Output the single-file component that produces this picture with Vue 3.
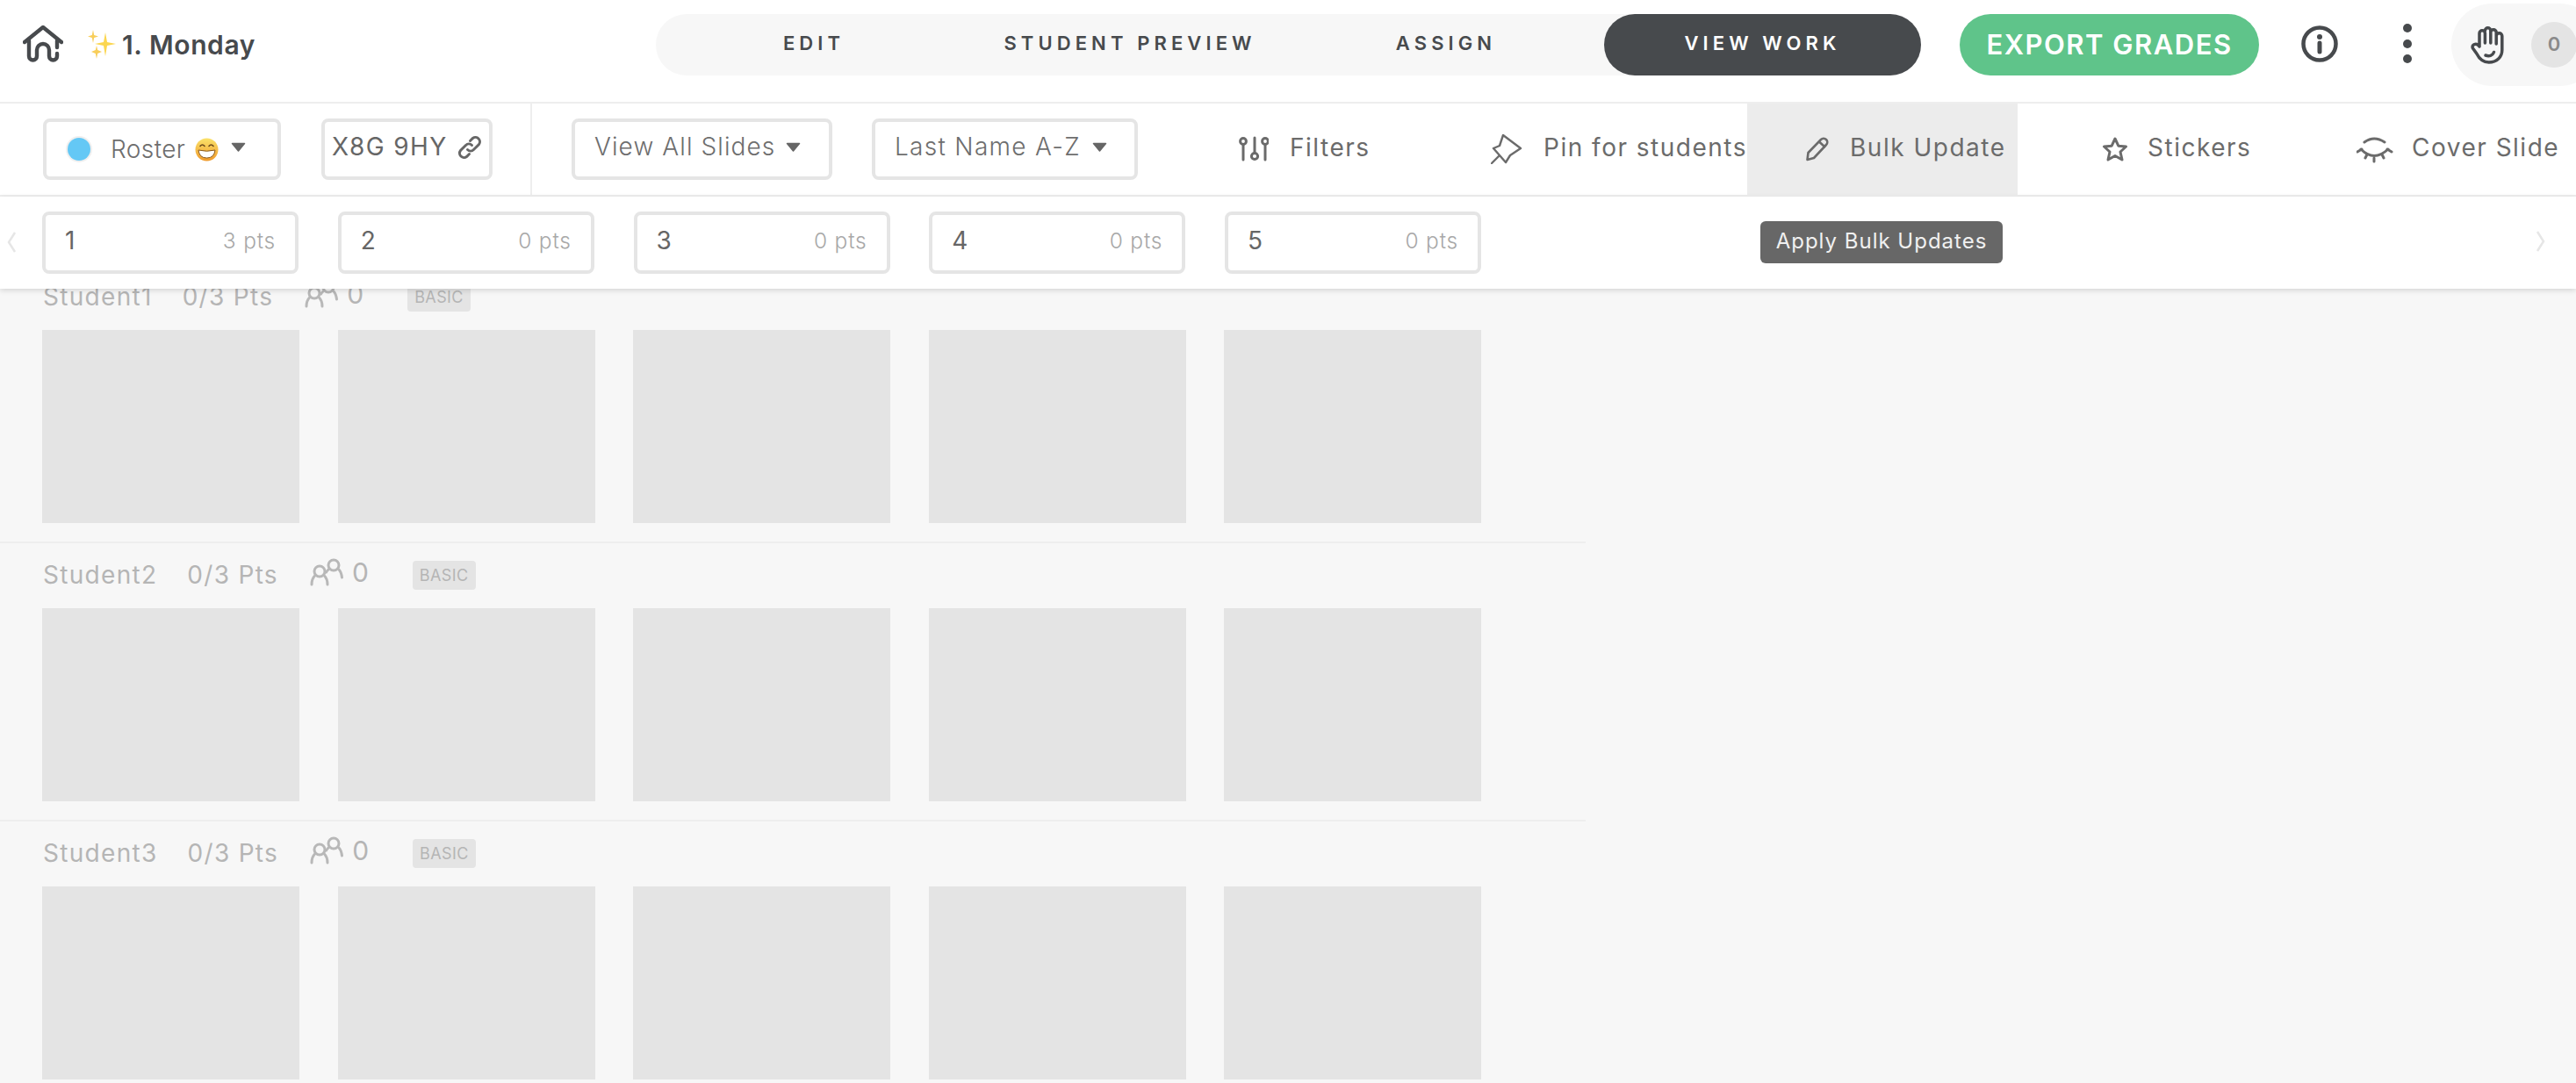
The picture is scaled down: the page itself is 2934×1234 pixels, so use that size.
<script setup>
const tabs = [
  { label: 'EDIT' },
  { label: 'STUDENT PREVIEW' },
  { label: 'ASSIGN' },
  { label: 'VIEW WORK', active: true },
]
const slides = [
  { n: 1, pts: 3 },
  { n: 2, pts: 0 },
  { n: 3, pts: 0 },
  { n: 4, pts: 0 },
  { n: 5, pts: 0 },
]
const students = ['Student1', 'Student2', 'Student3']
</script>

<template>
  <div class="page">
    <header class="top">
      <svg class="home" width="46" height="44" viewBox="0 0 46 44" fill="none" stroke="#474a4d" stroke-width="4.4" stroke-linecap="round" stroke-linejoin="round">
        <path d="M2 19 L23 2 L44 19" />
        <path d="M7 17 V35 a4.5 4.5 0 0 0 9 0 V28 a7 7 0 0 1 14 0 V35 a4.5 4.5 0 0 0 9 0 V32 M39 25 V17" />
      </svg>
      <svg class="spark" width="32" height="34" viewBox="0 0 32 34">
        <path d="M20 3 L22 14 L32 16 L22 18 L20 30 L18 18 L8 16 L18 14 Z" fill="#fbd650" />
        <path d="M6 0 L7.2 6 L12 7.5 L7.2 9 L6 15 L4.8 9 L0 7.5 L4.8 6 Z" fill="#f8ce5a" />
        <path d="M10 18 L11.2 23 L16 25 L11.2 27 L10 33 L8.8 27 L4 25 L8.8 23 Z" fill="#f8ce5a" />
      </svg>
      <span class="title">1. Monday</span>
      <nav class="pill">
        <span v-for="t in tabs" :key="t.label" class="tab" :class="{ active: t.active }">{{ t.label }}</span>
      </nav>
      <button class="export">EXPORT GRADES</button>
      <svg class="info" width="44" height="44" viewBox="0 0 44 44">
        <circle cx="22" cy="22" r="18.5" fill="none" stroke="#474a4d" stroke-width="4.5" />
        <circle cx="22" cy="14" r="3" fill="#474a4d" />
        <path d="M22 21 V31" stroke="#474a4d" stroke-width="5" stroke-linecap="round" />
      </svg>
      <div class="dots"><i></i><i></i><i></i></div>
      <div class="hand-wrap">
        <svg width="40" height="44" viewBox="0 0 40 44" fill="none" stroke="#474a4d" stroke-width="3.5" stroke-linecap="round" stroke-linejoin="round">
          <path d="M10 24 V9 a3.2 3.2 0 0 1 6.4 0 V20 M16.4 6 a3.2 3.2 0 0 1 6.4 0 V20 M22.8 8 a3.2 3.2 0 0 1 6.4 0 V21 M29.2 12 a3.2 3.2 0 0 1 6.6 0 V28 c0 8 -6 14 -15 14 c-7 0 -11 -4 -14 -10 L2.5 26 c-2 -4 4 -7 7.5 -2" />
          <path d="M17 34 c4 1.5 8 0.5 9.5 -3.5" />
        </svg>
        <span class="count">0</span>
      </div>
    </header>

    <section class="bar">
      <div class="box roster">
        <span class="dot"></span>
        <span class="box-text">Roster</span>
        <svg class="grin" width="27" height="27" viewBox="0 0 27 27">
          <defs>
            <linearGradient id="gr" x1="0" y1="0" x2="0" y2="1">
              <stop offset="0" stop-color="#fbe26a" />
              <stop offset="1" stop-color="#ef9a2c" />
            </linearGradient>
          </defs>
          <circle cx="13.5" cy="13.5" r="13" fill="url(#gr)" />
          <path d="M6 9.5 q2.5 -3 5 0 M16 9.5 q2.5 -3 5 0" fill="none" stroke="#6b4a1c" stroke-width="1.6" stroke-linecap="round" />
          <path d="M4 14 q9.5 2.5 19 0 q-1 9 -9.5 9 q-8.5 0 -9.5 -9 Z" fill="#fff" stroke="#8a5a1e" stroke-width="1" />
        </svg>
        <svg class="caret" width="17" height="11" viewBox="0 0 17 11"><path d="M1.5 1.5 H15.5 L8.5 10 Z" fill="#666" stroke="#666" stroke-width="1.5" stroke-linejoin="round" /></svg>
      </div>
      <div class="box code">
        <span class="code-text">X8G 9HY</span>
        <svg width="30" height="30" viewBox="0 0 30 30" fill="none" stroke="#666" stroke-width="3" stroke-linecap="round">
          <path d="M12.5 17.5 a5 5 0 0 0 7 0 l6 -6 a5 5 0 0 0 -7 -7 l-3 3" />
          <path d="M17.5 12.5 a5 5 0 0 0 -7 0 l-6 6 a5 5 0 0 0 7 7 l3 -3" />
        </svg>
      </div>
      <div class="divider"></div>
      <div class="box slides">
        <span class="box-text">View All Slides</span>
        <svg class="caret" width="17" height="11" viewBox="0 0 17 11"><path d="M1.5 1.5 H15.5 L8.5 10 Z" fill="#666" stroke="#666" stroke-width="1.5" stroke-linejoin="round" /></svg>
      </div>
      <div class="box sort">
        <span class="box-text">Last Name A-Z</span>
        <svg class="caret" width="17" height="11" viewBox="0 0 17 11"><path d="M1.5 1.5 H15.5 L8.5 10 Z" fill="#666" stroke="#666" stroke-width="1.5" stroke-linejoin="round" /></svg>
      </div>

      <div class="action a-filters">
        <svg width="34" height="30" viewBox="0 0 34 30" fill="none" stroke="#6b6b6b" stroke-width="3" stroke-linecap="round">
          <circle cx="5" cy="6" r="3.4" /><path d="M5 10 V27" />
          <path d="M18 2 V18" /><circle cx="18" cy="23" r="3.6" />
          <circle cx="30" cy="6" r="3.4" /><path d="M30 10 V27" />
        </svg>
        <span>Filters</span>
      </div>
      <div class="action a-pin">
        <svg width="36" height="34" viewBox="0 0 36 34" fill="none" stroke="#6b6b6b" stroke-width="2.4" stroke-linecap="round" stroke-linejoin="round">
          <path d="M14 1 L34 16 L22 24 L17 32 L3 16 L10 13 Z" />
          <path d="M9 25 L1 33" />
        </svg>
        <span>Pin for students</span>
      </div>
      <div class="action a-bulk">
        <svg width="28" height="28" viewBox="0 0 28 28" fill="none" stroke="#6b6b6b" stroke-width="2.6" stroke-linecap="round" stroke-linejoin="round">
          <path d="M2.5 26 L3.5 18 L18 3 a3.5 3.5 0 0 1 6 6 L10 24 Z" />
          <path d="M16 5.5 L22 11" />
        </svg>
        <span>Bulk Update</span>
      </div>
      <div class="action a-stickers">
        <svg width="30" height="28" viewBox="0 0 30 28" fill="none" stroke="#6b6b6b" stroke-width="3" stroke-linejoin="round">
          <path d="M15 2 L18.8 10.2 L27.5 11 L21 17 L23 26 L15 21.5 L7 26 L9 17 L2.5 11 L11.2 10.2 Z" />
        </svg>
        <span>Stickers</span>
      </div>
      <div class="action a-cover">
        <svg width="42" height="34" viewBox="0 0 42 34" fill="none" stroke="#6b6b6b" stroke-width="3" stroke-linecap="round">
          <path d="M9 9 Q20 1 32 9" />
          <path d="M5 17 Q20 32 36 17" />
          <path d="M1 20 L6 17 M10 27 L12 23 M20 31 V27 M31 27 L29 23 M40 20 L35 17" />
        </svg>
        <span>Cover Slide</span>
      </div>
    </section>

    <section class="strip">
      <svg class="chev" width="12" height="26" viewBox="0 0 12 26" fill="none" stroke="#e6e6e6" stroke-width="2.5"><path d="M10 2 L3 13 L10 24" /></svg>
      <div v-for="s in slides" :key="s.n" class="slide">
        <span class="num">{{ s.n }}</span>
        <span class="pts">{{ s.pts }} pts</span>
      </div>
      <svg class="chev right" width="12" height="26" viewBox="0 0 12 26" fill="none" stroke="#e6e6e6" stroke-width="2.5"><path d="M2 2 L9 13 L2 24" /></svg>
      <div class="tip">Apply Bulk Updates</div>
    </section>

    <main class="scroller">
      <div class="list">
        <div v-for="st in students" :key="st" class="row">
          <div class="head">
            <span class="name">{{ st }}</span>
            <span class="score">0/3 Pts</span>
            <span class="peers">
              <svg width="38" height="32" viewBox="0 0 38 32" fill="none" stroke="#b8b8b8" stroke-width="3" stroke-linecap="round">
                <circle cx="27" cy="8" r="6" />
                <path d="M21 13 c-1 1 -2 2 -2.5 3 M33 13 c2 2 3 5 3.5 9" />
                <circle cx="11" cy="15" r="6" fill="#f7f7f7" />
                <path d="M2 30 c0 -5 1.5 -8 4 -10.5 M20 30 c0 -5 -1.5 -8 -4 -10.5" />
              </svg>
              <span>0</span>
            </span>
            <span class="badge">BASIC</span>
          </div>
          <div class="thumbs">
            <div v-for="s in slides" :key="s.n" class="thumb"></div>
          </div>
        </div>
      </div>
    </main>
  </div>
</template>

<style>
html, body { margin: 0; padding: 0; background: #f7f7f7; }
</style>

<style scoped>
.page {
  width: 2934px;
  height: 1234px;
  overflow: hidden;
  display: flex;
  flex-direction: column;
  background: #f7f7f7;
  font-family: Inter, "Noto Sans", sans-serif;
  position: relative;
}
.top {
  height: 116px;
  flex: none;
  display: flex;
  align-items: center;
  background: #fff;
  border-bottom: 2px solid #eeeeee;
  box-sizing: content-box;
  padding-left: 26px;
}
.home { margin-top: -14px; flex: none; }
.spark { margin-left: 28px; margin-top: -14px; flex: none; }
.title {
  margin-left: 7px;
  margin-top: -14px;
  width: 608px;
  font-size: 30px;
  font-weight: 600;
  color: #474a4d;
  letter-spacing: 0.6px;
  flex: none;
}
.pill {
  display: flex;
  height: 70px;
  margin-top: -15px;
  border-radius: 35px;
  background: #f7f7f7;
  flex: none;
}
.tab {
  width: 360px;
  height: 70px;
  line-height: 66px;
  text-align: center;
  font-size: 22px;
  font-weight: 600;
  letter-spacing: 5.1px;
  color: #474a4d;
  border-radius: 35px;
}
.tab.active { width: 361px; background: #474a4d; color: #fff; }
.export {
  margin-left: 44px;
  margin-top: -15px;
  width: 341px;
  height: 70px;
  border: 0;
  padding: 0;
  border-radius: 35px;
  background: #5fc48a;
  color: #fff;
  font-family: inherit;
  font-size: 31px;
  font-weight: 600;
  letter-spacing: 1.5px;
  flex: none;
}
.info { margin-left: 47px; margin-top: -17px; flex: none; }
.dots {
  margin-left: 73px;
  margin-top: -17px;
  width: 10px;
  display: flex;
  flex-direction: column;
  gap: 7.5px;
  flex: none;
}
.dots i { width: 10px; height: 10px; border-radius: 50%; background: #474a4d; display: block; }
.hand-wrap {
  margin-left: 45px;
  margin-top: -14px;
  width: 170px;
  height: 94px;
  border-radius: 47px;
  background: #f7f7f7;
  display: flex;
  align-items: center;
  padding-left: 22px;
  box-sizing: border-box;
  flex: none;
}
.count {
  margin-left: 29px;
  width: 52px;
  height: 52px;
  border-radius: 50%;
  background: #e4e4e4;
  color: #8a8a8a;
  font-size: 22px;
  font-weight: 600;
  text-align: center;
  line-height: 50px;
  flex: none;
}

.bar {
  height: 104px;
  flex: none;
  display: flex;
  align-items: center;
  background: #fff;
  border-bottom: 2px solid #eeeeee;
  padding-left: 49px;
}
.box {
  height: 70px;
  box-sizing: border-box;
  border: 4px solid #e5e5e5;
  border-radius: 8px;
  display: flex;
  align-items: center;
  flex: none;
  background: #fff;
}
.box-text {
  font-size: 28px;
  font-weight: 300;
  letter-spacing: 1.1px;
  color: #6e6e6e;
  margin-top: -6px;
  white-space: nowrap;
}
.caret { flex: none; margin-top: -6px; }
.roster { width: 271px; padding-left: 24px; }
.dot {
  width: 26px;
  height: 26px;
  border-radius: 50%;
  background: #64c8f5;
  box-shadow: 0 0 0 2px #efefef;
  flex: none;
  margin-right: 23px;
}
.roster .box-text { margin-top: 0; letter-spacing: 0.4px; }
.grin { margin-left: 11px; margin-right: 14px; flex: none; }
.code { width: 195px; margin-left: 46px; padding-left: 8px; gap: 10px; }
.code-text { font-size: 28px; font-weight: 400; letter-spacing: 1.4px; color: #666; margin-top: -6px; white-space: nowrap; }
.code svg { margin-top: -4px; flex: none; }
.divider { width: 2px; height: 104px; background: #eeeeee; margin-left: 43px; flex: none; }
.slides { width: 297px; margin-left: 45px; padding-left: 22px; gap: 12px; }
.sort { width: 303px; margin-left: 45px; padding-left: 22px; gap: 13px; }
.sort .box-text { letter-spacing: 1.3px; }
.action {
  height: 104px;
  display: flex;
  align-items: center;
  box-sizing: border-box;
  flex: none;
  overflow: hidden;
  white-space: nowrap;
  font-size: 28px;
  font-weight: 400;
  letter-spacing: 1.5px;
  color: #6b6b6b;
}
.action svg { flex: none; }
.action span { margin-top: -5px; }
.a-filters { width: 386px; padding-left: 115px; gap: 24px; }
.a-pin { width: 308px; padding-left: 16px; gap: 24px; }
.a-bulk { width: 308px; padding-left: 66px; gap: 23px; background: #ececec; }
.a-stickers { width: 308px; padding-left: 96px; gap: 22px; }
.a-cover { width: 328px; padding-left: 78px; gap: 21px; }

.strip {
  height: 105px;
  flex: none;
  display: flex;
  align-items: center;
  background: #fff;
  box-shadow: 0 2px 6px rgba(0, 0, 0, 0.14);
  position: relative;
  z-index: 2;
  gap: 44.75px;
  box-sizing: border-box;
  padding-bottom: 1px;
}
.chev { flex: none; margin: 0 -15.75px 0 7px; }
.chev.right { position: absolute; left: 2888px; top: 38px; margin: 0; }
.slide {
  width: 292px;
  height: 71px;
  box-sizing: border-box;
  border: 4px solid #e5e5e5;
  border-radius: 8px;
  display: flex;
  align-items: center;
  justify-content: space-between;
  padding: 0 22px;
  flex: none;
}
.num { font-size: 28px; font-weight: 400; color: #666; margin-top: -5px; }
.pts { font-size: 24.5px; font-weight: 300; letter-spacing: 0.8px; color: #a8a8a8; margin-top: -5px; }
.tip {
  position: absolute;
  left: 2005px;
  top: 28px;
  width: 276px;
  height: 48px;
  border-radius: 6px;
  background: #676767;
  color: #f0f0f0;
  font-size: 24px;
  font-weight: 400;
  letter-spacing: 1px;
  line-height: 46px;
  text-align: center;
  white-space: nowrap;
}

.scroller { flex: 1; overflow: hidden; min-height: 0; }
.list { width: 1806px; margin-top: -27px; }
.row {
  box-sizing: border-box;
  height: 317px;
  border-bottom: 2px solid #eeeeee;
  padding-left: 48px;
}
.head {
  height: 74px;
  box-sizing: border-box;
  padding-top: 20px;
  display: flex;
  align-items: flex-start;
  color: #b5b5b5;
}
.name, .score { font-size: 28px; font-weight: 400; letter-spacing: 1.3px; line-height: 33px; }
.name { padding-left: 1px; }
.score { margin-left: 34px; }
.peers {
  display: flex;
  align-items: center;
  gap: 10px;
  margin-left: 36px;
  font-size: 30px;
  line-height: 32px;
  margin-top: -3px;
}
.badge {
  margin-left: 50px;
  height: 33px;
  line-height: 33px;
  padding: 0 8px;
  background: #e4e4e4;
  border-radius: 4px;
  font-size: 18px;
  letter-spacing: 0.4px;
  color: #b5b5b5;
}
.thumbs { display: flex; gap: 43.5px; }
.thumb { width: 293px; height: 220px; background: #e4e4e4; flex: none; }
</style>
